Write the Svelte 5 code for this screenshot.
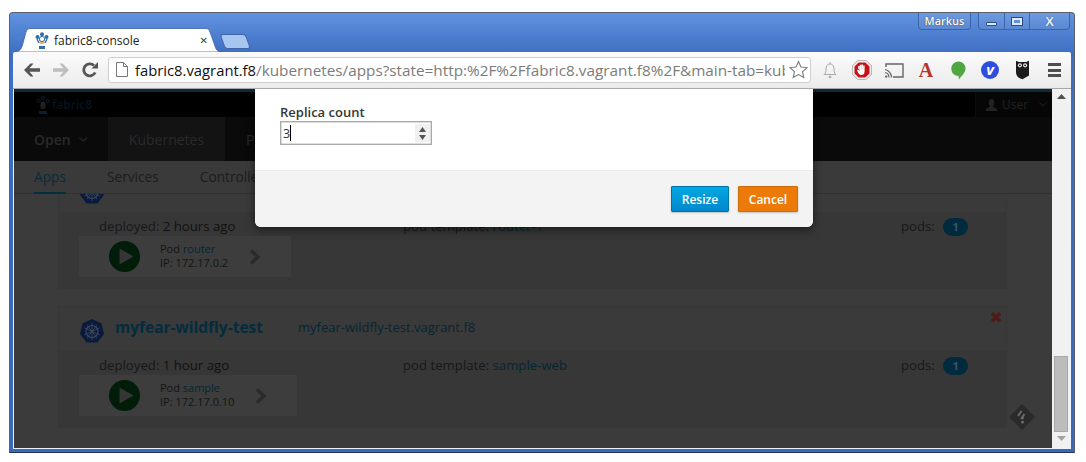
<script>
  const cards = [
    { name: 'router', host: 'router.vagrant.f8', age: '2 hours ago', tpl: 'router-1', ip: '172.17.0.2', boxw: 212 },
    { name: 'myfear-wildfly-test', host: 'myfear-wildfly-test.vagrant.f8', age: '1 hour ago', tpl: 'sample-web', pod: 'sample', ip: '172.17.0.10', boxw: 218 }
  ]
</script>

{#snippet kube(size)}
  <svg class="kube" width={size} height={size} viewBox="0 0 24 24">
    <path d="M12 0 L21.5 4.6 L24 15 L17.3 23.5 L6.7 23.5 L0 15 L2.5 4.6 Z" fill="#0a1a3c" />
    <circle cx="12" cy="12.5" r="6" fill="none" stroke="#3c465c" stroke-width="1.2" />
    <path d="M12 4v17M4.5 9l15 7M19.5 9l-15 7M7 19l10-13M17 19L7 6" stroke="#3c465c" stroke-width=".9" />
    <circle cx="12" cy="12.5" r="1.4" fill="#3c465c" />
  </svg>
{/snippet}

<div class="screen">
  <div class="window">
    <div class="titlebar">
      <div class="tab">
        <svg class="tab-bg" width="209" height="24" viewBox="0 0 209 24">
          <path d="M0 24 C6 24 8 22 9.5 17 L13 4 C14 1 15 .5 18 .5 L192 .5 C195 .5 196 1 197 4 L202 18 C203 22 205 24 209 24 Z" fill="#fff" stroke="#3c62a4" stroke-width=".8" />
        </svg>
        <svg class="favicon" width="14" height="17" viewBox="0 0 14 17">
          <path d="M4 8 h6 l-1 4 h-4z" fill="#f6b26b" />
          <path d="M4 14 h6 v3 h-6z" fill="#2f6fa8" />
          <circle cx="2.5" cy="5" r="2" fill="#2f6fa8" /><circle cx="7" cy="2.2" r="2" fill="#2f6fa8" /><circle cx="11.5" cy="5" r="2" fill="#2f6fa8" />
          <circle cx="7" cy="7" r="2.6" fill="#fff" stroke="#2f6fa8" />
          <path d="M2 7l2 4M12 7l-2 4" stroke="#2f6fa8" stroke-width="1.4" />
        </svg>
        <span class="tab-title">fabric8-console</span>
        <span class="tab-close">✕</span>
      </div>
      <div class="newtab"></div>
      <div class="controls">
        <div class="user-btn">Markus</div>
        <div class="winbtns">
          <div class="winbtn"><i class="min"></i></div>
          <div class="winbtn"><i class="max"></i></div>
          <div class="winbtn close">X</div>
        </div>
      </div>
    </div>

    <div class="toolbar">
      <div class="navbtns">
        <svg width="16" height="14" viewBox="0 0 16 14"><path d="M0 7 L6.5 .5 H9.5 L5.5 5.3 H16 V8.7 H5.5 L9.5 13.5 H6.5 Z" fill="#555" /></svg>
        <svg width="16" height="14" viewBox="0 0 16 14"><path d="M16 7 L9.5 .5 H6.5 L10.5 5.3 H0 V8.7 H10.5 L6.5 13.5 H9.5 Z" fill="#bdbdbd" /></svg>
        <svg width="16" height="16" viewBox="0 0 16 16"><path d="M13.2 10.5 A6 6 0 1 1 12 3.6" fill="none" stroke="#555" stroke-width="2.8" /><path d="M9.5 6.5 H16 V0 Z" fill="#555" /></svg>
      </div>
      <div class="omnibox">
        <svg width="12" height="15" viewBox="0 0 12 15"><path d="M.5 .5 H7.5 L11.5 4.5 V14.5 H.5 Z M7.5 .5 V4.5 H11.5" fill="#fff" stroke="#777" /></svg>
        <div class="url"><span class="host">fabric8.vagrant.f8</span><span class="path">/kubernetes/apps?state=http:%2F%2Ffabric8.vagrant.f8%2F&amp;main-tab=kubernetes</span></div>
        <svg width="19" height="19" viewBox="0 0 20 20"><path d="M10 1.5 L12.6 7.3 L19 8 L14.2 12.2 L15.6 18.5 L10 15.3 L4.4 18.5 L5.8 12.2 L1 8 L7.4 7.3 Z" fill="#fff" stroke="#777" stroke-width="1.1" /></svg>
      </div>
      <div class="exts">
        <span class="ext"><svg width="14" height="18" viewBox="0 0 14 18"><path d="M1 13.5 C3 12 3 10 3 8 C3 5 4.5 3 7 3 C9.5 3 11 5 11 8 C11 10 11 12 13 13.5 Z" fill="none" stroke="#aaa" /><path d="M7 1v2" stroke="#aaa" /><circle cx="7" cy="16" r="1.3" fill="#aaa" /></svg></span>
        <span class="ext"><svg width="20" height="20" viewBox="0 0 20 20"><path d="M6 .5 H14 L19.5 6 V14 L14 19.5 H6 L.5 14 V6 Z" fill="#c8121a" stroke="#888" /><path d="M6 .5 H14 L19.5 6 V14 L14 19.5 H6 L.5 14 V6 Z M6.6 2.5 L2.5 6.6 V13.4 L6.6 17.5 H13.4 L17.5 13.4 V6.6 L13.4 2.5 Z" fill="#eee" fill-rule="evenodd" /><path d="M6.2 9 V6 H7.6 V9 M7.8 9 V4.8 H9.3 V9 M9.5 9 V4.6 H11 V9 M11.2 9 V5.6 H12.6 V11 C12.6 14 11 15 9.4 15 C7.5 15 6.8 14 6 12.5 L5 10 L6.2 9.5 L7.4 11 V9 Z" fill="#fff" /></svg></span>
        <span class="ext"><svg width="19" height="15" viewBox="0 0 19 15"><path d="M1 4 V1 H18 V14 H8" fill="none" stroke="#666" stroke-width="1.4" /><path d="M0 6.5 A8 8 0 0 1 6.5 14.5 M0 9.5 A5 5 0 0 1 4 14.5" fill="none" stroke="#666" stroke-width="1.2" /><circle cx="1.2" cy="13.6" r="1.2" fill="#666" /></svg></span>
        <span class="ext ext-a">A</span>
        <span class="ext"><svg width="15" height="19" viewBox="0 0 15 19"><path d="M7.5 .5 A7 7 0 0 1 14.5 7.5 C14.5 12 10 15 8 18.5 L7.5 15 A7 7 0 0 1 7.5 .5 Z" fill="#4ea83f" /></svg></span>
        <span class="ext"><span class="ext-v">v</span></span>
        <span class="ext"><svg width="13" height="20" viewBox="0 0 14 20"><path d="M0 0 L3 1.5 H11 L14 0 V16 L7 20 C3 19 0 17 0 12 Z" fill="#1c1c1c" /><circle cx="4.2" cy="5" r="2.2" fill="#eee" /><circle cx="9.8" cy="5" r="2.2" fill="#eee" /><circle cx="4.2" cy="5" r="1" fill="#111" /><circle cx="9.8" cy="5" r="1" fill="#111" /></svg></span>
        <span class="ext"><span class="menu"><i></i><i></i><i></i></span></span>
      </div>
    </div>

    <div class="viewport">
      <div class="page">
        <div class="topbar">
          <div class="brand">
            <svg width="14" height="18" viewBox="0 0 14 18">
              <path d="M4 9 h6 l-1 4 h-4z" fill="#1c1c1c" /><path d="M3 15 h8 v3 h-8z" fill="#0a2030" />
              <circle cx="2.5" cy="5" r="1.6" fill="none" stroke="#0a2030" /><circle cx="7" cy="2" r="1.6" fill="none" stroke="#0a2030" /><circle cx="11.5" cy="5" r="1.6" fill="none" stroke="#0a2030" />
              <circle cx="7" cy="8" r="2.4" fill="#222" />
            </svg>
            <span>fabric8</span>
          </div>
          <div class="user">
            <svg width="11" height="12" viewBox="0 0 11 12"><path d="M0 12 V10 L3.8 8 V7 C3 6 2.8 5 2.8 3.5 C2.8 1 4 0 5.5 0 C7 0 8.2 1 8.2 3.5 C8.2 5 8 6 7.2 7 V8 L11 10 V12 Z" fill="#222" /></svg>
            <span>User</span>
            <svg class="chev" width="8" height="5" viewBox="0 0 8 5"><path d="M.5 .5 L4 4 L7.5 .5" fill="none" stroke="#222" /></svg>
          </div>
        </div>
        <div class="mainnav">
          <div class="navitem open">Open <svg width="9" height="5" viewBox="0 0 9 5"><path d="M.5 .5 L4.5 4.2 L8.5 .5" fill="none" stroke="#2a2a2a" stroke-width="1.2" /></svg></div>
          <div class="navitem active">Kubernetes</div>
          <div class="navitem">Projects</div>
        </div>
        <div class="subnav">
          <span class="sub current">Apps</span>
          <span class="sub">Services</span>
          <span class="sub">Controllers</span>
        </div>
        <div class="scroller">
          {#each cards as c}
            <div class="card">
              <div class="card-head">
                {@render kube(24)}
                <a class="name">{c.name}</a>
                <a class="hostlink">{c.host}</a>
                <span class="del">✖</span>
              </div>
              <div class="card-body">
                <div class="meta">
                  <div class="col-deployed">deployed: <b>{c.age}</b></div>
                  <div class="col-tpl">pod template: <a>{c.tpl}</a></div>
                  <div class="col-pods">pods: <span class="badge">1</span></div>
                </div>
                <div class="podbox" style="width: {c.boxw}px">
                  <svg class="play" width="31" height="31" viewBox="0 0 31 31"><circle cx="15.5" cy="15.5" r="15.5" fill="#011c08" /><path d="M10.5 7.5 L24.5 15.5 L10.5 23.5 Z" fill="#353535" /></svg>
                  <div class="podinfo">
                    <div>Pod <a>{c.pod ?? c.name}</a></div>
                    <div>IP: {c.ip}</div>
                  </div>
                  <svg class="more" width="12" height="16" viewBox="0 0 12 16"><path d="M2 1.5 L9 8 L2 14.5" fill="none" stroke="#2a2a2a" stroke-width="3.4" /></svg>
                </div>
              </div>
            </div>
          {/each}
        </div>

        <div class="feedback">
          <svg width="26" height="26" viewBox="0 0 26 26"><path d="M13 0 L26 13 L13 26 L0 13 Z" fill="#2a2a2a" /><path d="M12.5 7 L9 12 M15.5 10 L12 15 M14 13 L13.5 15" stroke="#6a6a6a" stroke-width="2" /><circle cx="13.5" cy="18" r="1.5" fill="#6a6a6a" /></svg>
        </div>

        <div class="modal">
          <div class="modal-body">
            <label class="field-label" for="replicas">Replica count</label>
            <div class="spin" id="replicas">
              <span class="val">3</span><span class="caret"></span>
              <span class="spinner">
                <svg width="7" height="5" viewBox="0 0 7 5"><path d="M3.5 0 L7 5 H0 Z" fill="#555" /></svg>
                <svg width="7" height="5" viewBox="0 0 7 5"><path d="M0 0 H7 L3.5 5 Z" fill="#555" /></svg>
              </span>
            </div>
          </div>
          <div class="modal-foot">
            <button class="btn resize">Resize</button>
            <button class="btn cancel">Cancel</button>
          </div>
        </div>
      </div>

      <div class="scrollbar">
        <svg width="9" height="5" viewBox="0 0 9 5"><path d="M4.5 0 L9 5 H0 Z" fill="#505050" /></svg>
        <div class="track"><div class="thumb"></div></div>
        <svg width="9" height="5" viewBox="0 0 9 5"><path d="M0 0 H9 L4.5 5 Z" fill="#a3a3a3" /></svg>
      </div>
    </div>
  </div>
</div>

<style>
  :global(body) { margin: 0; background: #fff; }
  .screen {
    width: 1086px; height: 462px; box-sizing: border-box;
    padding: 12px 11px 9px 9px;
    font-family: "Open Sans", sans-serif;
    overflow: hidden;
  }
  .window {
    height: 100%; box-sizing: border-box;
    display: flex; flex-direction: column;
    background: linear-gradient(#6093e0 0, #3f6fc2 40px, #3b69ba 100%);
    border: 1px solid #5a5f6a;
    border-bottom-color: #23355c;
    border-radius: 4px 4px 0 0;
    padding: 0 3px 3px 3px;
  }

  /* title bar */
  .titlebar { height: 39px; display: flex; align-items: flex-end; position: relative; flex-shrink: 0; }
  .tab {
    position: relative; width: 209px; height: 24px;
    display: flex; align-items: center;
    box-sizing: border-box; padding: 1px 14px 0 22px;
    z-index: 1;
  }
  .tab-bg { position: absolute; left: 0; top: 0; }
  .favicon { position: relative; margin-right: 5px; }
  .tab-title { position: relative; font-size: 12px; color: #222; flex: 1; }
  .tab-close { position: relative; font-size: 10px; color: #444; font-family: "DejaVu Sans", sans-serif; font-weight: bold; }
  .newtab {
    width: 26px; height: 15px; margin: 0 0 3px 3px;
    background: #a6c6f0; border: 1px solid #3f66ab; border-radius: 3px;
    box-sizing: border-box;
    transform: skewX(20deg);
    transform-origin: bottom;
  }
  .controls {
    margin-left: auto; align-self: flex-start;
    display: flex; gap: 7px; margin-right: 1px;
  }
  .user-btn, .winbtns {
    height: 17px; box-sizing: border-box;
    border: 1px solid #3d63a8; border-top: 0;
    border-radius: 0 0 4px 4px;
    background: linear-gradient(#6d9be0, #5a88d2);
  }
  .user-btn {
    width: 53px; font-size: 11px; line-height: 16px; text-align: center;
    color: #fff; text-shadow: 0 0 1px #222;
    font-weight: 600;
  }
  .winbtns { display: flex; width: 92px; }
  .winbtn { width: 25px; display: flex; align-items: center; justify-content: center; border-left: 1px solid #3d63a8; color: #e6eefc; font-size: 13px; font-weight: 700; font-family: "Liberation Sans", sans-serif; box-sizing: border-box; }
  .winbtn:first-child { border-left: 0; }
  .winbtn.close { flex: 1; text-shadow: 0 0 1px #1c2f57; }
  .min { width: 9px; height: 2px; background: #dfe8f8; border: 1px solid #2c4a86; margin-top: 6px; border-radius: 1px; }
  .max { width: 6px; height: 3px; border: 2px solid #dfe8f8; outline: 1px solid #2c4a86; }

  /* toolbar */
  .toolbar {
    height: 37px; box-sizing: border-box; flex-shrink: 0;
    background: linear-gradient(#fbfbfb, #ebebeb);
    border-bottom: 1px solid #a8a8a8;
    display: flex; align-items: center;
    padding: 0 1px 0 11px;
    border-radius: 2px 2px 0 0;
    position: relative;
  }
  .navbtns { display: flex; gap: 13px; align-items: center; width: 84px; }
  .omnibox {
    width: 703px; height: 26px; box-sizing: border-box;
    background: #fff; border: 1px solid #cfcfcf; border-radius: 3px;
    display: flex; align-items: center;
    padding: 0 2px 0 7px;
    margin-top: -1px;
  }
  .url {
    flex: 1; min-width: 0; overflow: hidden; white-space: nowrap;
    font-size: 14.8px; color: #7b7b7b; margin: 0 4px 0 7px;
  }
  .host { color: #111; }
  .path { font-size: 15.3px; }
  .exts { flex: 1; display: flex; align-items: center; padding-left: 3px; }
  .ext { width: 32px; flex-shrink: 0; display: flex; align-items: center; justify-content: center; }
  .ext-a { font: bold 20px/20px "Liberation Serif", serif; color: #b6352a; }
  .ext-v {
    width: 18px; height: 18px; border-radius: 50%;
    background: #2e4ee0; color: #fff;
    font: italic bold 15px/16px "Open Sans", sans-serif; text-align: center;
  }
  .menu { display: flex; flex-direction: column; gap: 2.5px; }
  .menu i { display: block; width: 13px; height: 3px; background: #4e4e4e; }

  /* page */
  .viewport { flex: 1; min-height: 0; display: flex; background: #eef2fa; padding: 0 1px 1px 1px; }
  .page { position: relative; flex: 1; min-width: 0; background: #3b3b3b; overflow: hidden; display: flex; flex-direction: column; }
  .topbar {
    height: 25px; flex-shrink: 0;
    background: #000; border-top: 3px solid #0c2a38;
    display: flex; justify-content: space-between;
  }
  .brand { display: flex; align-items: center; gap: 2px; margin-left: 22px; color: #06141f; font-size: 12px; font-weight: 600; }
  .user {
    width: 77px; box-sizing: border-box; padding-left: 10px;
    background: #060606; border-left: 1px solid #0c0c0c;
    display: flex; align-items: center; gap: 5px;
    font-size: 12px; color: #222;
  }
  .chev { margin-left: 6px; }
  .mainnav { height: 44px; flex-shrink: 0; background: #0a0a0a; display: flex; align-items: stretch; color: #2a2a2a; font-size: 14px; }
  .navitem { display: flex; align-items: center; padding: 0 21px; }
  .navitem.open { width: 94px; box-sizing: border-box; padding-left: 20px; gap: 8px; font-weight: 600; }
  .navitem.active { background: #131313; width: 117px; box-sizing: border-box; justify-content: center; }
  .subnav {
    height: 33px; flex-shrink: 0; box-sizing: border-box;
    background: #3a3a3a; border-bottom: 1px solid #313131;
    display: flex; gap: 41px; padding-left: 20px;
    font-size: 13.7px; color: #1c1c1c; line-height: 32px;
  }
  .sub.current { color: #082a3c; height: 33px; border-bottom: 2px solid #052e41; box-sizing: border-box; }
  .scroller { flex: 1; min-height: 0; overflow: hidden; padding: 0 45px 0 44px; }
  .card {
    border: 1px solid #373737; background: #3a3a3a;
    margin-bottom: 17px;
    height: 122px; box-sizing: border-box;
  }
  .card:first-child { margin-top: -27px; }
  .card-head { height: 44px; display: flex; align-items: center; padding-left: 21px; position: relative; }
  .kube { margin-top: 3px; }
  .name { margin: -4px 0 0 11px; font-size: 15.5px; font-weight: 700; color: #032c3e; }
  .hostlink { margin: -4px 0 0 35px; font-size: 13px; color: #052634; }
  .del { position: absolute; right: 3px; top: 1px; color: #4e1a1a; font-size: 16px; font-family: "DejaVu Sans", sans-serif; }
  .card-body { height: 76px; background: #373737; }
  .meta { height: 24px; box-sizing: border-box; padding-top: 4px; display: flex; align-items: center; font-size: 13.2px; color: #181818; position: relative; }
  .meta b { font-weight: 400; color: #111; }
  .meta a { color: #052634; }
  .col-deployed { margin-left: 40px; width: 304px; }
  .col-tpl { width: 498px; }
  .badge {
    display: inline-block; width: 25px; height: 18px; margin-left: 5px;
    border-radius: 9px; background: #002a3e; color: #385464;
    font-size: 11px; font-weight: 700; line-height: 18px; text-align: center;
  }
  .podbox { height: 41px; margin-left: 20px; background: #3d3d3d; display: flex; align-items: center; box-sizing: border-box; padding-left: 30px; }
  .podinfo { margin-left: 20px; font-size: 11px; line-height: 14px; color: #141414; flex: 1; margin-top: -1px; }
  .podinfo a { color: #052634; }
  .more { margin-right: 30px; }
  .feedback { position: absolute; left: 995px; top: 315px; width: 26px; height: 26px; }

  /* modal */
  .modal {
    position: absolute; left: 241px; top: 0; width: 558px; height: 138px;
    background: #fff; border-radius: 0 0 6px 6px;
    box-shadow: 0 3px 9px rgba(0,0,0,.5);
    display: flex; flex-direction: column;
    overflow: hidden;
  }
  .modal-body { height: 82px; flex-shrink: 0; box-sizing: border-box; padding: 15px 25px 0; border-bottom: 1px solid #ececec; }
  .field-label { display: block; font-size: 13px; font-weight: 600; color: #363636; line-height: 17px; }
  .spin {
    width: 152px; height: 24px; box-sizing: border-box;
    border: 1px solid #a9a9a9; outline: 0;
    display: flex; align-items: center;
    padding: 1px 1px 1px 1px; box-shadow: inset 0 0 0 .5px #bbb;
    font-size: 12.5px; color: #333;
  }
  .val { margin-left: 1px; }
  .caret { width: 1px; height: 16px; background: #000; margin-left: 0; }
  .spinner {
    margin-left: auto; width: 15px; height: 18px; background: #f0f0f0;
    display: flex; flex-direction: column; align-items: center; justify-content: center; gap: 3px;
  }
  .modal-foot { flex: 1; background: #f3f3f3; display: flex; justify-content: flex-end; align-items: flex-start; gap: 9px; padding: 15px 15px 0 0; }
  .btn {
    height: 26px; padding: 0; border-radius: 1px;
    font: 600 12px "Open Sans", sans-serif; color: #fff;
    box-shadow: 0 1px 2px rgba(0,0,0,.2);
  }
  .resize { width: 58px; background: linear-gradient(#00a8e1, #0088ce); border: 1px solid #0071a8; }
  .cancel { width: 60px; background: #ec7a08; border: 1px solid #cf6c07; }

  /* scrollbar */
  .scrollbar {
    width: 18px; flex-shrink: 0; background: #f1f1f1;
    display: flex; flex-direction: column; align-items: center;
    padding: 5px 0 7px; box-sizing: border-box;
    gap: 3px;
  }
  .track { flex: 1; width: 100%; display: flex; flex-direction: column; justify-content: flex-end; padding: 0 2px; box-sizing: border-box; }
  .thumb { height: 76px; background: #bcbcbc; border: 1px solid #a8a8a8; box-sizing: border-box; margin-bottom: 1px; }
</style>
